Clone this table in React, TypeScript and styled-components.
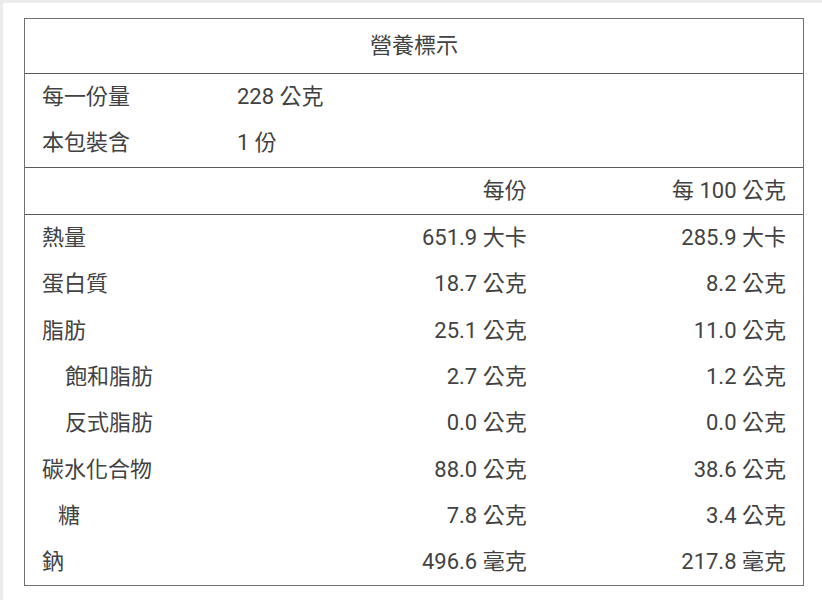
import React from "react"
import styled, { createGlobalStyle } from "styled-components"

const GlobalStyle = createGlobalStyle`
  html, body {
    margin: 0;
    padding: 0;
    background: #ececec;
  }
  body {
    font-family: "Roboto", "Noto Sans CJK TC", "Noto Sans", sans-serif;
    color: #424242;
  }
`

type Nutrient = {
  name: string
  perServing: string
  per100: string
  indent?: number
}

const nutrients: Nutrient[] = [
  { name: "熱量", perServing: "651.9 大卡", per100: "285.9 大卡" },
  { name: "蛋白質", perServing: "18.7 公克", per100: "8.2 公克" },
  { name: "脂肪", perServing: "25.1 公克", per100: "11.0 公克" },
  { name: "飽和脂肪", perServing: "2.7 公克", per100: "1.2 公克", indent: 23 },
  { name: "反式脂肪", perServing: "0.0 公克", per100: "0.0 公克", indent: 23 },
  { name: "碳水化合物", perServing: "88.0 公克", per100: "38.6 公克" },
  { name: "糖", perServing: "7.8 公克", per100: "3.4 公克", indent: 16 },
  { name: "鈉", perServing: "496.6 毫克", per100: "217.8 毫克" },
]

const Page = styled.div`
  margin: 3px 0 0 3px;
  min-height: 597px;
  background: #fff;
  padding: 15px 18px 0 21px;
  box-sizing: border-box;
`

const Label = styled.div`
  width: 780px;
  border: 1px solid #707070;
  box-sizing: border-box;
  font-size: 22px;
`

const Title = styled.div`
  height: 55px;
  box-sizing: border-box;
  padding-bottom: 6px;
  display: flex;
  align-items: center;
  justify-content: center;
  border-bottom: 1px solid #5a5a5a;
`

const Section = styled.div`
  border-bottom: 1px solid #5a5a5a;
`

const ServingRow = styled.div`
  display: grid;
  grid-template-columns: 195px 1fr;
  align-items: center;
  height: 46.3px;
  box-sizing: border-box;
  padding: 0 17px 6px;
`

const Grid = styled.div`
  display: grid;
  grid-template-columns: repeat(3, 1fr);
  align-items: center;
  height: 46.3px;
  box-sizing: border-box;
  padding-bottom: 6px;
`

const Cell = styled.div<{ $align?: "left" | "right"; $indent?: number }>`
  padding: 0 17px 0 ${(p) => 17 + (p.$indent ?? 0)}px;
  text-align: ${(p) => p.$align ?? "left"};
  white-space: nowrap;
`

export default function App() {
  return (
    <>
      <GlobalStyle />
      <Page>
        <Label>
          <Title>營養標示</Title>
          <Section>
            <ServingRow>
              <span>每一份量</span>
              <span>228 公克</span>
            </ServingRow>
            <ServingRow>
              <span>本包裝含</span>
              <span>1 份</span>
            </ServingRow>
          </Section>
          <Section>
            <Grid>
              <Cell />
              <Cell $align="right">每份</Cell>
              <Cell $align="right">每 100 公克</Cell>
            </Grid>
          </Section>
          {nutrients.map((n) => (
            <Grid key={n.name}>
              <Cell $indent={n.indent}>{n.name}</Cell>
              <Cell $align="right">{n.perServing}</Cell>
              <Cell $align="right">{n.per100}</Cell>
            </Grid>
          ))}
        </Label>
      </Page>
    </>
  )
}
